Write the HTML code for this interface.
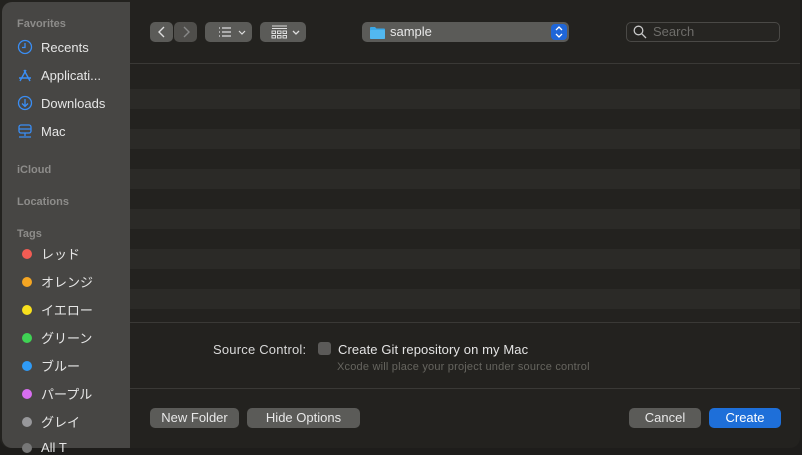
<!DOCTYPE html><html><head><meta charset="utf-8"><style>
*{margin:0;padding:0;box-sizing:border-box}
body{width:802px;height:450px;background:#1e1d1b;font-family:"Liberation Sans","Noto Sans CJK JP",sans-serif;position:relative;overflow:hidden}
.main{position:absolute;left:0;top:0;width:800px;height:448px;background:#23221f;border-radius:0 0 10px 10px}
.side{position:absolute;left:2px;top:2px;width:128px;height:446px;background:#474644;border-radius:10px 0 0 10px}
.sh{position:absolute;left:15px;font-size:11px;color:#8d8c8a;font-weight:bold}
.si{position:absolute;left:15px;font-size:13px;color:#e6e6e6;display:flex;align-items:center}
.si svg{margin-right:8px}
.dot{width:10px;height:10px;border-radius:50%;margin:0 9px 0 5px}
.btn{position:absolute;height:20px;background:#5b5b58;border-radius:5px;color:#e8e8e8;font-size:13px;text-align:center;line-height:20px}
.stripe{position:absolute;left:130px;width:670px;height:20px;background:#2b2a27}
</style></head><body>
<div class="main"></div>
<div style="position:absolute;left:130px;top:63px;width:670px;height:1px;background:#3a3936"></div>
<div class="stripe" style="top:89px"></div><div class="stripe" style="top:129px"></div><div class="stripe" style="top:169px"></div><div class="stripe" style="top:209px"></div><div class="stripe" style="top:249px"></div><div class="stripe" style="top:289px"></div>
<div style="position:absolute;left:130px;top:322px;width:670px;height:1px;background:#3a3936"></div>
<div style="position:absolute;left:130px;top:388px;width:670px;height:1px;background:#3a3936"></div>
<div class="side">
<div class="sh" style="top:16px">Favorites</div>
<div class="si" style="top:37px"><svg width="16" height="16" viewBox="0 0 16 16" fill="none" stroke="#3a8ef5" stroke-width="1.3"><circle cx="8" cy="8" r="6.5"/><path d="M8 4v4.5h-3"/></svg>Recents</div>
<div class="si" style="top:65px"><svg width="16" height="16" viewBox="0 0 16 16" fill="none" stroke="#3a8ef5" stroke-width="1.4"><path d="M3 14l6-11M13 14L7 3M2 11h12"/></svg>Applicati...</div>
<div class="si" style="top:93px"><svg width="16" height="16" viewBox="0 0 16 16" fill="none" stroke="#3a8ef5" stroke-width="1.3"><circle cx="8" cy="8" r="6.5"/><path d="M8 4v7M5 8.5l3 3 3-3"/></svg>Downloads</div>
<div class="si" style="top:121px"><svg width="16" height="16" viewBox="0 0 16 16" fill="none" stroke="#3a8ef5" stroke-width="1.3"><rect x="2" y="2" width="12" height="8" rx="2"/><path d="M2 6h12M8 10v3M2 14h12"/></svg>Mac</div>
<div class="sh" style="top:162px">iCloud</div>
<div class="sh" style="top:194px">Locations</div>
<div class="sh" style="top:226px">Tags</div>
<div class="si" style="top:242px"><span class="dot" style="background:#f25c54"></span>レッド</div>
<div class="si" style="top:270px"><span class="dot" style="background:#f5a623"></span>オレンジ</div>
<div class="si" style="top:298px"><span class="dot" style="background:#f8e01d"></span>イエロー</div>
<div class="si" style="top:326px"><span class="dot" style="background:#3fd354"></span>グリーン</div>
<div class="si" style="top:354px"><span class="dot" style="background:#2f9bf7"></span>ブルー</div>
<div class="si" style="top:382px"><span class="dot" style="background:#d86ef0"></span>パープル</div>
<div class="si" style="top:410px"><span class="dot" style="background:#98989b"></span>グレイ</div>
<div class="si" style="top:438px"><span class="dot" style="background:#777"></span>All T</div>
</div>
<div class="btn" style="left:150px;top:22px;width:23px"><svg width="10" height="12" viewBox="0 0 10 12" fill="none" stroke="#ddd" stroke-width="1.4" style="margin-top:4px"><path d="M7 1L2 6l5 5"/></svg></div>
<div class="btn" style="left:174px;top:22px;width:23px;background:#4f4e4b"><svg width="10" height="12" viewBox="0 0 10 12" fill="none" stroke="#888" stroke-width="1.4" style="margin-top:4px"><path d="M3 1l5 5-5 5"/></svg></div>
<div class="btn" style="left:205px;top:22px;width:47px"><svg width="40" height="14" viewBox="0 0 40 14" fill="none" stroke="#ddd" stroke-width="1.2" style="margin-top:3px"><path d="M10 3h1M10 7h1M10 11h1M13 3h9M13 7h9M13 11h9M30 6l3 3 3-3"/></svg></div>
<div class="btn" style="left:260px;top:22px;width:46px"><svg width="40" height="14" viewBox="0 0 40 14" fill="none" stroke="#ddd" stroke-width="1" style="margin-top:3px"><path d="M9 1h15M9 3.5h15"/><rect x="9" y="6" width="3.5" height="2.5"/><rect x="14.5" y="6" width="3.5" height="2.5"/><rect x="20" y="6" width="3.5" height="2.5"/><rect x="9" y="10.5" width="3.5" height="2.5"/><rect x="14.5" y="10.5" width="3.5" height="2.5"/><rect x="20" y="10.5" width="3.5" height="2.5"/><path d="M30 6l3 3 3-3" stroke-width="1.3"/></svg></div>
<div class="btn" style="left:362px;top:22px;width:207px;text-align:left;padding-left:28px">sample
<svg width="15" height="13" viewBox="0 0 15 13" style="position:absolute;left:8px;top:4px"><path d="M0 2a1 1 0 011-1h4l1.5 1.5H14a1 1 0 011 1V12a1 1 0 01-1 1H1a1 1 0 01-1-1z" fill="#3aa8e8"/><rect x="0" y="4" width="15" height="9" rx="1" fill="#52b8f0"/></svg>
<div style="position:absolute;right:2px;top:2px;width:16px;height:16px;background:#1f66d8;border-radius:4px"><svg width="16" height="16" viewBox="0 0 16 16" fill="none" stroke="#fff" stroke-width="1.3"><path d="M5 6l3-3 3 3M5 10l3 3 3-3"/></svg></div></div>
<div style="position:absolute;left:626px;top:22px;width:154px;height:20px;border:1px solid #4a4946;border-radius:5px;background:#262522;color:#6e6d6a;font-size:13px;line-height:18px;padding-left:26px">Search
<svg width="14" height="14" viewBox="0 0 14 14" fill="none" stroke="#c8c8c8" stroke-width="1.3" style="position:absolute;left:6px;top:2px"><circle cx="5.5" cy="5.5" r="4.3"/><path d="M8.7 8.7L13 13"/></svg></div>
<div style="position:absolute;left:213px;top:342px;font-size:13px;color:#d8d8d8;letter-spacing:0.2px">Source Control:</div>
<div style="position:absolute;left:318px;top:342px;width:13px;height:13px;background:#5b5a58;border-radius:3px"></div>
<div style="position:absolute;left:338px;top:342px;font-size:13px;color:#e4e4e4;letter-spacing:0.1px">Create Git repository on my Mac</div>
<div style="position:absolute;left:337px;top:361px;font-size:11px;color:#66655f;letter-spacing:0.2px">Xcode will place your project under source control</div>
<div class="btn" style="left:150px;top:408px;width:89px">New Folder</div>
<div class="btn" style="left:247px;top:408px;width:113px">Hide Options</div>
<div class="btn" style="left:629px;top:408px;width:72px">Cancel</div>
<div class="btn" style="left:709px;top:408px;width:72px;background:#1e6fd9;color:#fff">Create</div>
</body></html>
